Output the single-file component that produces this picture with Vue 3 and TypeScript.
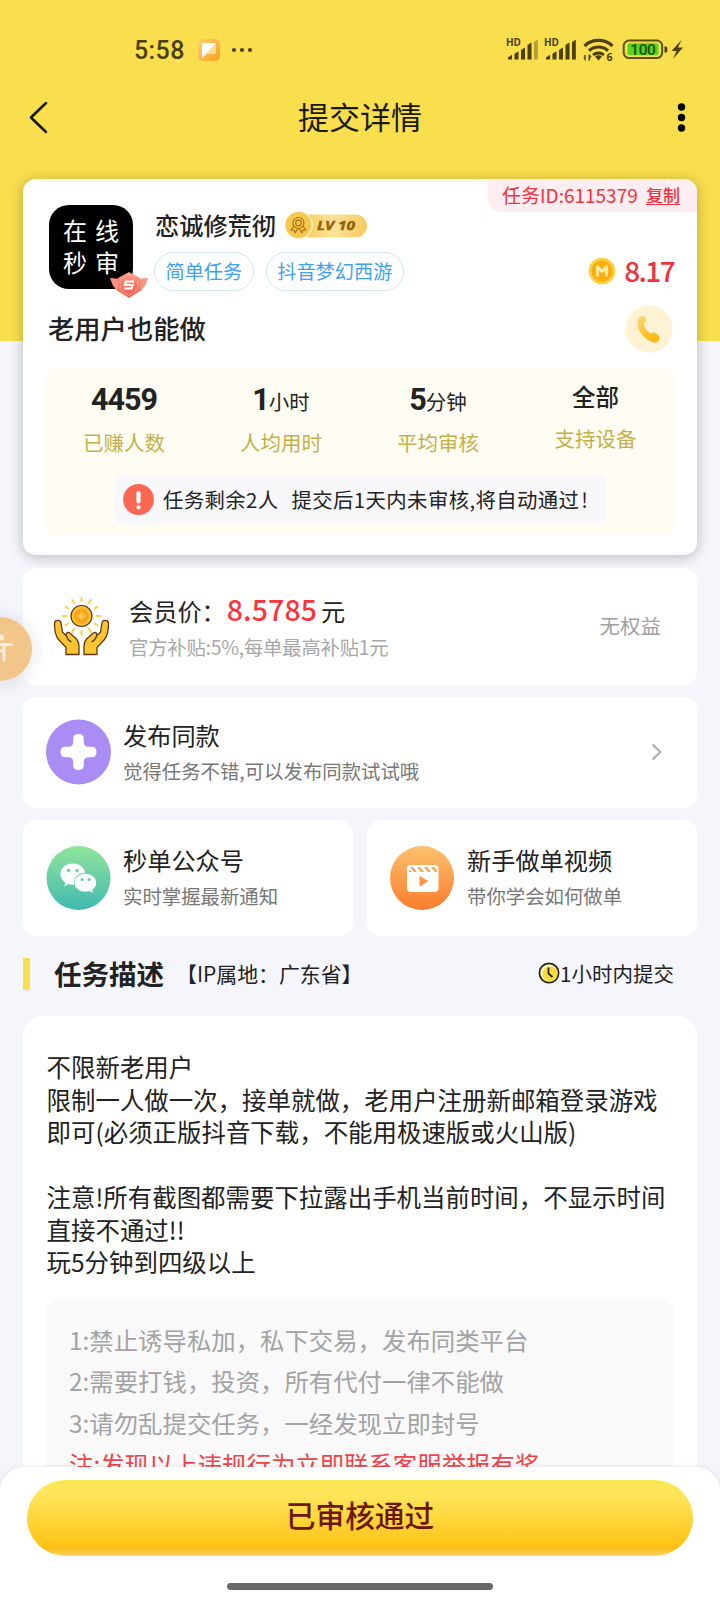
<script setup lang="ts">
interface Stat { num: string; unit: string; label: string }

const tags: string[] = ['简单任务', '抖音梦幻西游']
const stats: Stat[] = [
  { num: '4459', unit: '', label: '已赚人数' },
  { num: '1', unit: '小时', label: '人均用时' },
  { num: '5', unit: '分钟', label: '平均审核' },
  { num: '', unit: '全部', label: '支持设备' },
]
const description: string[] = [
  '不限新老用户',
  '限制一人做一次，接单就做，老用户注册新邮箱登录游戏',
  '即可(必须正版抖音下载，不能用极速版或火山版)',
  '',
  '注意!所有截图都需要下拉露出手机当前时间，不显示时间',
  '直接不通过!!',
  '玩5分钟到四级以上',
]
const rules: string[] = [
  '1:禁止诱导私加，私下交易，发布同类平台',
  '2:需要打钱，投资，所有代付一律不能做',
  '3:请勿乱提交任务，一经发现立即封号',
]
const rays: number[] = Array.from({ length: 12 }, (_, i) => i * 30)
</script>

<template>
  <div class="page">
    <header class="top">
      <div class="status">
        <span class="time">5:58</span>
        <svg class="app-ico" width="22" height="22" viewBox="0 0 22 22">
          <defs>
            <linearGradient id="appg" x1="0" y1="0" x2="1" y2="1">
              <stop offset="0" stop-color="#fbd070" /><stop offset="1" stop-color="#fba01f" />
            </linearGradient>
          </defs>
          <rect width="22" height="22" rx="5" fill="url(#appg)" />
          <path d="M4 4H18V15H9L4 19Z" fill="#fcd98d" />
          <path d="M4 4H18L4 19Z" fill="#fff" />
        </svg>
        <svg class="more-ico" width="22" height="6" viewBox="0 0 22 6" fill="#4b420e">
          <circle cx="3" cy="3" r="2.1" /><circle cx="11" cy="3" r="2.1" /><circle cx="19" cy="3" r="2.1" />
        </svg>
        <svg class="sys" width="182" height="36" viewBox="-2 -5 182 36" fill="#4b400a">
          <g v-for="k in 2" :key="k" :transform="`translate(${(k - 1) * 38} 0)`">
            <text x="0" y="8.6" class="hd" textLength="15" lengthAdjust="spacingAndGlyphs">HD</text>
            <path d="M2 20.5l4-2.8V22.500H2zM8.500 16.700l4-2.400V22.500h-4zM15 13l4-2.400V22.500h-4zM21.500 8l4-2.400V22.500h-4z" />
            <path d="M28 5l3.800-2.200V22.500H28z" :opacity="k === 1 ? 0.4 : 1" />
          </g>
          <g fill="none" stroke="#4b400a" stroke-width="3.200">
            <path d="M78.500 9a20.500 20.500 0 0 1 28 0" />
            <path d="M83 13.700a14 14 0 0 1 19 0" />
            <path d="M87 18a8.500 8.500 0 0 1 11 0" stroke-width="2.800" />
          </g>
          <path d="M89 19.500q3.500-2.500 7 0l-3.500 4zM79 23.500l-1.800-3h1.100v-2.500h1.400v5.500zM82.500 17.500h1.300l2 3h-1.700v3h-1.600z" />
          <text x="100.500" y="24" class="six">6</text>
          <rect x="117.700" y="3.500" width="38.500" height="17.600" rx="5.500" fill="none" stroke="#5c5010" stroke-width="2" />
          <rect x="121.500" y="6.300" width="31" height="12" rx="2" fill="#57d422" />
          <path d="M158.500 9.500h1.300q1.500 0 1.500 1.500v3q0 1.500-1.500 1.500h-1.300z" />
          <text x="124.300" y="17.800" class="pct" textLength="25.500">100</text>
          <path d="M175.500 3L165.500 14h5l-3.500 8L177 10.500h-5z" />
        </svg>
      </div>
      <div class="nav">
        <svg width="22" height="34" viewBox="0 0 22 34" fill="none" stroke="#16140a" stroke-width="2.500" stroke-linecap="round" stroke-linejoin="round"><path d="M18 3L3 17.500 18 32" /></svg>
        <h1>提交详情</h1>
        <svg width="10" height="32" viewBox="0 0 10 32"><circle cx="5.500" cy="6" r="3.700" /><circle cx="5.500" cy="16.500" r="3.700" /><circle cx="5.500" cy="27" r="3.700" /></svg>
      </div>
    </header>

    <main>
      <section class="card task">
        <div class="task-id"><span>任务ID:6115379</span><b>复制</b></div>
        <div class="who">
          <div class="avatar">
            <span>在</span><span>线</span><span>秒</span><span>审</span>
            <svg class="rank" width="38" height="28" viewBox="0 0 38 28">
              <defs><linearGradient id="rk" x1="0" y1="0" x2="0" y2="1"><stop offset="0" stop-color="#fa9c8c" /><stop offset="1" stop-color="#f8573f" /></linearGradient></defs>
              <path d="M0 7l11 1v13L7 20 5 17 3 15z M38 7l-11 1v13l4-1 2-3 2-2z" fill="#fa9384" />
              <path d="M19 1l11 6v13l-11 7-11-7V7z" fill="url(#rk)" />
              <path d="M19 3.500l9 5v10l-9 6-9-6v-10z" fill="none" stroke="#fdb3a6" stroke-width=".8" />
              <path d="M24 10.500h-8l-1 3.500h7.500l-1.100 3.500h-7" fill="none" stroke="#fff" stroke-width="2.200" />
            </svg>
          </div>
          <div class="info">
            <div class="name-row">
              <strong>恋诚修荒彻</strong>
              <svg width="83" height="28" viewBox="0 0 83 28">
                <defs><linearGradient id="lv" x1="0" x2="1"><stop offset="0" stop-color="#f5c84a" /><stop offset=".5" stop-color="#fbe39a" /><stop offset="1" stop-color="#f5ca61" /></linearGradient></defs>
                <rect x="14" y="3.500" width="68" height="23" rx="11.500" fill="url(#lv)" />
                <circle cx="14" cy="14" r="14" fill="#fff3c9" /><circle cx="13.500" cy="14" r="13" fill="#f5c951" />
                <g fill="none" stroke="#ab7414" stroke-width="1.200">
                  <circle cx="13.500" cy="12" r="5.500" /><circle cx="13.500" cy="12" r="2.800" />
                  <path d="M9 15l-3 4 3 .2 1.200 2.500 2.500-4M18 15l3 4-3 .2-1.200 2.500-2.500-4" />
                </g>
                <text x="32" y="19" class="lv" textLength="38" lengthAdjust="spacingAndGlyphs">LV 10</text>
              </svg>
            </div>
            <div class="tags"><span v-for="t in tags" :key="t">{{ t }}</span></div>
          </div>
          <div class="reward">
            <svg width="28" height="28" viewBox="0 0 28 28">
              <circle cx="14" cy="14" r="13.300" fill="#fbd03e" /><circle cx="14" cy="14" r="10.500" fill="#fbad12" />
              <path d="M9.500 18.500V9.500l4.500 5 4.500-5v9" fill="none" stroke="#fff0a6" stroke-width="2.700" stroke-linejoin="round" stroke-linecap="round" />
            </svg>
            <span>8.17</span>
          </div>
        </div>
        <div class="title-row">
          <h2>老用户也能做</h2>
          <svg width="48" height="48" viewBox="0 0 48 48">
            <defs><linearGradient id="ph" x1="0" y1="0" x2=".5" y2="1"><stop offset="0" stop-color="#fcd978" /><stop offset="1" stop-color="#fbb813" /></linearGradient></defs>
            <circle cx="24" cy="24" r="23.600" fill="#fdf2d4" />
            <path d="M14 12.500c2-2.300 5.500-2 6.500.5.900 2.200.3 4-1.300 5.500-.4 3.800 2.800 8 6.500 9.700 2-1.200 3.800-1 5.300.3l2.500 2c1.500 1.300 1.500 3 .5 4.700-1.500 2.500-4.500 3-7.500 1.500C17 32.500 11 23.500 12.500 15.500z" fill="url(#ph)" />
          </svg>
        </div>
        <div class="stats">
          <div class="cols">
            <div v-for="s in stats" :key="s.label" class="stat" :class="{ plain: !s.num }">
              <p class="val"><b v-if="s.num">{{ s.num }}</b><span>{{ s.unit }}</span></p>
              <p class="lab">{{ s.label }}</p>
            </div>
          </div>
          <div class="notice">
            <svg width="31" height="31" viewBox="0 0 31 31"><circle cx="15.500" cy="15.500" r="15.400" fill="#fa6752" /><path d="M15.500 9v8.500" stroke="#fff" stroke-width="4.200" stroke-linecap="round" /><circle cx="15.500" cy="23.300" r="2.100" fill="#fff" /></svg>
            <span class="n1">任务剩余2人</span><span>提交后1天内未审核,将自动通过<i class="bang">!</i></span>
          </div>
        </div>
      </section>

      <section class="card member">
        <svg width="58" height="60" viewBox="0 0 58 60" overflow="visible">
          <g stroke="#fbd044" stroke-width="2" stroke-linecap="round">
            <path v-for="a in rays" :key="a" d="M28.500 4v-3.500" :transform="`rotate(${a} 28.500 19)`" />
          </g>
          <circle cx="28.500" cy="19" r="10.500" fill="#fcc43a" stroke="#5a3a18" stroke-width="1.200" />
          <circle cx="28.500" cy="19" r="7.500" fill="#f9a51b" />
          <path d="M28.500 13.500q.8 4.700 5.500 5.500-4.700.8-5.500 5.500-.8-4.700-5.500-5.500 4.700-.8 5.500-5.500z" fill="#fdc94c" />
          <g fill="#fcc52f" stroke="#5a3a18" stroke-width="1.300" stroke-linejoin="round">
            <path v-for="m in ['', 'translate(57 0) scale(-1 1)']" :key="m" :transform="m" d="M1.500 26.500c0-3.800 5.800-4.300 6.500-.3l1.500 8.800 3.800 3.800c-.6-3.200 1.700-4.500 4-2.400l6.200 5.600c2 2.300 2.500 4 2.500 7v8.500H13V50.500L5.500 42.500C3 39.500 1.500 33 1.500 26.500zM13.300 38.800q1.200 4.200 5.200 6.200" />
          </g>
        </svg>
        <div class="txt">
          <p class="t">会员价：<em>8.5785</em>元</p>
          <p class="s">官方补贴:5%,每单最高补贴1元</p>
        </div>
        <span class="none">无权益</span>
      </section>

      <section class="card entry publish">
        <svg width="66" height="66" viewBox="0 0 66 66"><circle cx="33.500" cy="33" r="32.500" fill="#a98df5" /><path d="M28.200 20q0-5 5.300-5t5.300 5v3q0 4.700 4.700 4.700h3q5 0 5 5.300t-5 5.300h-3q-4.700 0-4.700 4.700v3q0 5-5.300 5t-5.300-5v-3q0-4.700-4.700-4.700h-3q-5 0-5-5.300t5-5.300h3q4.700 0 4.700-4.700z" fill="#fff" /></svg>
        <div class="txt"><p class="t">发布同款</p><p class="s">觉得任务不错,可以发布同款试试哦</p></div>
        <svg class="chev" width="12" height="18" viewBox="0 0 12 18" fill="none" stroke="#aaa" stroke-width="2"><path d="M1.500 1.500L9.500 9l-8 7.500" /></svg>
      </section>

      <div class="pair">
        <section class="card entry">
          <svg width="66" height="66" viewBox="0 0 66 66">
            <defs><linearGradient id="wx" x1="0" y1="0" x2="0" y2="1"><stop offset="0" stop-color="#90e59b" /><stop offset="1" stop-color="#42b9b0" /></linearGradient></defs>
            <circle cx="33.500" cy="33" r="32" fill="url(#wx)" />
            <path d="M27.500 18.500c7 0 12.200 4.200 12.500 9.200-7.500.3-12.500 6-10.700 12-2.300.3-4 0-5.800-.6l-4.300 2.200 1-3.800c-3-2-4.700-5-4.700-8.500 0-6 5.500-10.500 12-10.500z" fill="#fff" />
            <path d="M40.500 28.800c6 0 10.700 4 10.700 9 0 3-1.600 5.500-4 7l1 3-3.700-1.700c-8 2-15-2-15-8.300 0-5 5-9 11-9z" fill="#fff" />
            <g fill="#65cfa5"><circle cx="23.500" cy="25.500" r="1.700" /><circle cx="32" cy="25.500" r="1.700" /><circle cx="37" cy="34.500" r="1.500" /><circle cx="44" cy="34.500" r="1.500" /></g>
          </svg>
          <div class="txt"><p class="t">秒单公众号</p><p class="s">实时掌握最新通知</p></div>
        </section>
        <section class="card entry">
          <svg width="66" height="66" viewBox="0 0 66 66">
            <defs><linearGradient id="vd" x1="0" y1="0" x2="0" y2="1"><stop offset="0" stop-color="#fcc16e" /><stop offset="1" stop-color="#fb7d2c" /></linearGradient></defs>
            <circle cx="33" cy="33" r="32" fill="url(#vd)" />
            <rect x="18" y="20" width="31.500" height="27" rx="4" fill="#fff" />
            <path d="M21 22h3l4 5h-3zM28 22h3l4 5h-3zM35 22h3l4 5h-3zM42 22h3l3 4v1h-2zM20 24l2.500 3H20z" fill="#fba252" />
            <path d="M31 31.500l7.500 4.700-7.500 4.700z" fill="#fb9647" stroke="#fb9647" stroke-linejoin="round" />
          </svg>
          <div class="txt"><p class="t">新手做单视频</p><p class="s">带你学会如何做单</p></div>
        </section>
      </div>

      <div class="section-head">
        <i class="bar"></i>
        <h3>任务描述</h3>
        <span class="ip">【IP属地：广东省】</span>
        <span class="limit">
          <svg width="22" height="22" viewBox="0 0 22 22"><circle cx="11" cy="11" r="9.600" fill="#fff5b0" stroke="#222" stroke-width="1.800" /><circle cx="12" cy="12" r="7.500" fill="#fadc3c" /><path d="M10.500 5.500v6l4 3.500" fill="none" stroke="#222" stroke-width="1.800" /></svg>1小时内提交
        </span>
      </div>

      <section class="card desc">
        <p v-for="(line, i) in description" :key="i" class="line">{{ line }}</p>
        <div class="rules">
          <p v-for="r in rules" :key="r">{{ r }}</p>
          <p class="warn">注:发现以上违规行为立即联系客服举报有奖</p>
        </div>
      </section>
    </main>

    <div class="float">
      <svg width="64" height="64" viewBox="0 0 64 64" fill="none" stroke="#fbeedd" stroke-width="3" stroke-linecap="round"><circle cx="33" cy="20.500" r="3" fill="#fbeedd" stroke="none" /><path d="M22 27.500h21M30 28v15M36 28v15M30 34h6" /></svg>
    </div>

    <footer class="foot">
      <button>已审核通过</button>
      <i class="home"></i>
    </footer>
  </div>
</template>

<style>
body { background: #f5f6fb; overflow: hidden; }
</style>

<style scoped>
* { box-sizing: border-box; margin: 0; padding: 0; }
.page { position: relative; width: 720px; height: 1600px; overflow: hidden; background: linear-gradient(#f9de4e 341px, #f5f6fb 341px); font-family: "Noto Sans CJK SC", sans-serif; color: #222; font-size: 20px; font-weight: 400; }
svg { display: block; flex: none; }
.top { height: 179px; }
.status { height: 76px; padding: 24px 34px 0 134px; display: flex; align-items: center; color: #4b400a; }
.time { font: 500 25px/30px Roboto, sans-serif; letter-spacing: .4px; width: 52px; margin-top: 2px; }
.app-ico { margin-left: 12px; }
.more-ico { margin-left: 11px; }
.sys { margin-left: auto; }
.hd { font: bold 10px "Open Sans", sans-serif; }
.six { font: bold 10.5px "Open Sans", sans-serif; }
.pct { font: 500 15.5px Roboto, sans-serif; fill: #244c0a; }
.nav { height: 82px; padding: 0 34px 0 28px; display: flex; align-items: center; }
.nav h1 { margin: 0 auto 2px 248px; }
h1 { font-size: 31px; font-weight: 400; line-height: 40px; color: #1c190b; }
main { padding: 0 23px; display: flex; flex-direction: column; gap: 12px; }
.card { background: #fff; border-radius: 13px; }
.task { position: relative; height: 376px; padding: 26px 23px 0; box-shadow: 0 2px 14px rgba(0, 0, 0, .25); }
.task-id { position: absolute; top: 0; right: 0; width: 209px; height: 33px; padding-left: 14px; border-radius: 0 13px 0 13px; background: #ffeef1; color: #ee3340; display: flex; align-items: center; padding-bottom: 2px; line-height: 30px; font-size: 19px; }
.task-id b { margin-left: auto; margin-right: 17px; font-size: 17px; font-weight: 500; text-decoration: underline; text-underline-offset: 2px; }
.who { display: flex; height: 90px; padding-left: 3px; }
.avatar { position: relative; width: 84px; height: 84px; border-radius: 20px; background: #000; color: #fff; display: grid; grid-template-columns: 32px 32px; grid-auto-rows: 32px; justify-content: center; align-content: center; text-align: center; font-size: 24px; line-height: 30px; }
.rank { position: absolute; left: 61px; top: 66px; }
.info { margin-left: 23px; }
.name-row { display: flex; height: 40px; align-items: center; }
.name-row strong { font-size: 24.2px; font-weight: 500; width: 130px; line-height: 36px; margin-left: -1px; }
.lv { font: italic bold 13px "Open Sans", sans-serif; fill: #93600c; stroke: #93600c; stroke-width: .4; }
.tags { display: flex; gap: 12px; margin: 7px 0 0 -2px; }
.tags span { height: 39px; border: 1px solid #d3e6f9; border-radius: 20px; padding: 0 10.5px; color: #3fa1ef; font-size: 19.2px; line-height: 36px; }
.reward { margin: 45px 0 0 auto; height: 40px; display: flex; align-items: center; color: #ed3340; }
.reward svg { margin-top: 2px; }
.reward span { font: 500 28px/38px "Noto Sans CJK SC"; margin-left: 8px; letter-spacing: -1.6px; }
.title-row { display: flex; justify-content: space-between; align-items: center; height: 68px; padding: 0 1px 0 2px; }
h2 { font-size: 26.3px; font-weight: 500; line-height: 40px; margin-bottom: 3px; }
.stats { height: 168px; margin-top: 5px; background: #fffdf3; border-radius: 12px; }
.cols { display: grid; grid-template-columns: repeat(4, 1fr); height: 107px; text-align: center; padding-top: 12px; }
.stat { padding-right: 1px; }
.val { height: 40px; line-height: 40px; font-size: 20.5px; }
.val b { font: bold 30.5px/40px Roboto, sans-serif; letter-spacing: -1px; }
.lab { color: #c3b04a; font-size: 20.5px; line-height: 30px; margin-top: 7px; }
.plain { padding-right: 0; }
.plain .val { font-size: 23.5px; line-height: 32px; height: 36px; font-weight: 500; }
.notice { width: 491px; height: 49px; margin: 0 auto; background: #f8f8fa; border-radius: 8px; display: flex; align-items: center; padding: 0 8px; font-size: 20.4px; letter-spacing: .38px; line-height: 30px; white-space: nowrap; }
.notice span { margin-bottom: 2px; }
.notice .n1 { margin-left: 9.5px; margin-right: 13px; }
.bang { font-style: normal; margin-left: 2px; }
.member { height: 117px; padding: 0 36px 0 30px; display: flex; align-items: center; margin-top: 1px; }
.member .txt { margin-left: 18px; }
.txt { padding-bottom: 3px; }
.txt .t { font-size: 24.2px; line-height: 36px; }
.txt .s { font-size: 19.4px; line-height: 30px; margin-top: 3px; color: #777; }
.member .s { color: #a8a8a8; letter-spacing: -.25px; }
.member .txt { padding-bottom: 1px; }
.member em { font: 500 28.5px/36px "Noto Sans CJK SC"; color: #f8353c; margin: 0 4px 0 1px; letter-spacing: .1px; }
.none { margin-left: auto; margin-bottom: 4px; color: #a0a0a0; font-size: 20.5px; }
.entry { height: 111px; padding: 0 33px 0 22px; display: flex; align-items: center; }
.publish { padding: 0 34px 2px 22px; }
.entry .txt { margin-left: 12px; }
.publish .txt { padding-bottom: 1px; }
.chev { margin-left: auto; }
.pair { display: grid; grid-template-columns: 330px 330px; gap: 14px; }
.pair .entry { height: 116px; padding-right: 0; }
.section-head { height: 56px; padding-bottom: 7px; display: flex; align-items: center; }
.bar { width: 7px; height: 32px; margin-top: 3px; background: #f9de4e; }
h3 { font-size: 27.5px; font-weight: 700; margin-left: 24px; }
.ip { font-size: 20.9px; margin-left: 12px; }
.limit { margin-left: auto; margin-right: 23px; display: flex; align-items: center; font-size: 20.5px; }
.desc { height: 600px; border-radius: 20px; padding: 35px 23px 0; }
.line { height: 32.5px; line-height: 32.5px; font-size: 24.45px; padding-left: .6px; white-space: nowrap; }
.rules { margin-top: 21px; height: 260px; border-radius: 12px; background: #f9f9fa; color: #a3a3a3; padding: 19px 23px; font-size: 24.4px; line-height: 41.5px; white-space: nowrap; }
.warn { color: #f04349; }
.float { position: absolute; left: -32px; top: 617px; width: 64px; height: 64px; border-radius: 50%; background: #f2c68a; box-shadow: 0 2px 12px 6px rgba(120, 130, 150, .12); }
.foot { position: absolute; left: 0; right: 0; bottom: 0; height: 133px; border-radius: 24px 24px 0 0; background: #fff; box-shadow: 0 -1px 5px rgba(0, 0, 0, .07); padding-top: 13px; display: flex; flex-direction: column; align-items: center; }
button { width: 666px; height: 76px; padding-bottom: 6px; border: 0; border-radius: 38px; background: linear-gradient(#fee755 0%, #fee55a 20%, #ffc71e 80%, #ffbe18 90%, #ffd469 100%); color: #6d160d; font: 500 29.7px/64px "Noto Sans CJK SC"; }
.home { width: 266px; height: 7px; border-radius: 4px; background: #696969; margin-top: 27px; }
</style>
